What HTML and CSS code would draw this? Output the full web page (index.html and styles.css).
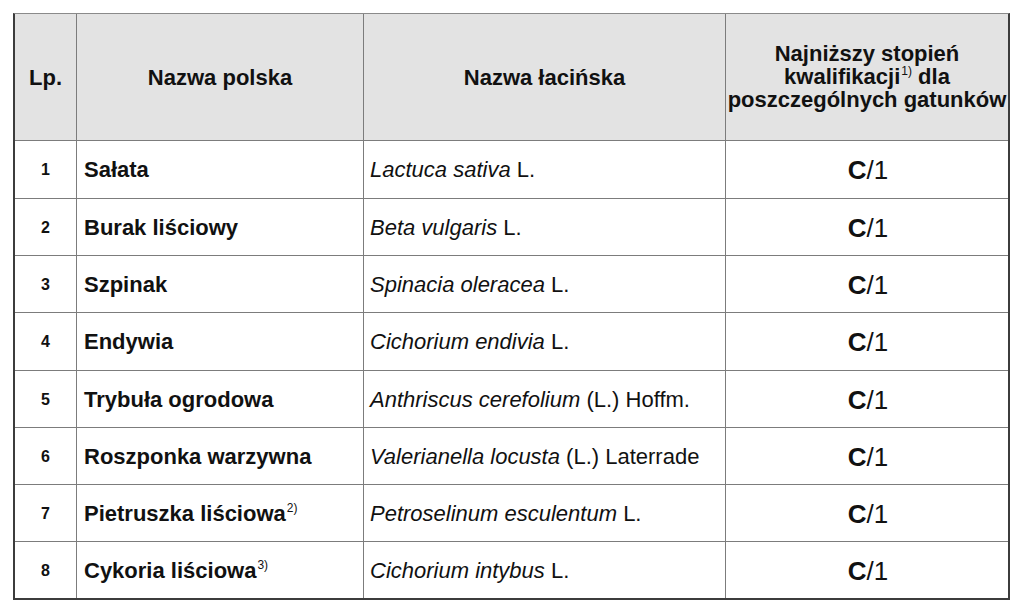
FILE: index.html
```html
<!DOCTYPE html>
<html lang="pl">
<head>
<meta charset="utf-8">
<title>Tabela gatunków</title>
<link rel="stylesheet" href="styles.css">
</head>
<body>
<div class="table">
  <div class="cell head num"><span>Lp.</span></div>
  <div class="cell head"><span>Nazwa polska</span></div>
  <div class="cell head"><span>Nazwa łacińska</span></div>
  <div class="cell head last wrap"><span>Najniższy stopień kwalifikacji<sup>1)</sup> dla poszczególnych gatunków</span></div>

  <div class="cell lp"><span>1</span></div>
  <div class="cell pl"><span>Sałata</span></div>
  <div class="cell la"><span><i>Lactuca sativa</i> L.</span></div>
  <div class="cell grade last"><span><b>C</b>/1</span></div>

  <div class="cell lp"><span>2</span></div>
  <div class="cell pl"><span>Burak liściowy</span></div>
  <div class="cell la"><span><i>Beta vulgaris</i> L.</span></div>
  <div class="cell grade last"><span><b>C</b>/1</span></div>

  <div class="cell lp"><span>3</span></div>
  <div class="cell pl"><span>Szpinak</span></div>
  <div class="cell la"><span><i>Spinacia oleracea</i> L.</span></div>
  <div class="cell grade last"><span><b>C</b>/1</span></div>

  <div class="cell lp"><span>4</span></div>
  <div class="cell pl"><span>Endywia</span></div>
  <div class="cell la"><span><i>Cichorium endivia</i> L.</span></div>
  <div class="cell grade last"><span><b>C</b>/1</span></div>

  <div class="cell lp"><span>5</span></div>
  <div class="cell pl"><span>Trybuła ogrodowa</span></div>
  <div class="cell la"><span><i>Anthriscus cerefolium</i> (L.) Hoffm.</span></div>
  <div class="cell grade last"><span><b>C</b>/1</span></div>

  <div class="cell lp"><span>6</span></div>
  <div class="cell pl"><span>Roszponka warzywna</span></div>
  <div class="cell la"><span><i>Valerianella locusta</i> (L.) Laterrade</span></div>
  <div class="cell grade last"><span><b>C</b>/1</span></div>

  <div class="cell lp"><span>7</span></div>
  <div class="cell pl"><span>Pietruszka liściowa<sup>2)</sup></span></div>
  <div class="cell la"><span><i>Petroselinum esculentum</i> L.</span></div>
  <div class="cell grade last"><span><b>C</b>/1</span></div>

  <div class="cell lp bottom"><span>8</span></div>
  <div class="cell pl bottom"><span>Cykoria liściowa<sup>3)</sup></span></div>
  <div class="cell la bottom"><span><i>Cichorium intybus</i> L.</span></div>
  <div class="cell grade last bottom"><span><b>C</b>/1</span></div>
</div>
</body>
</html>
```
FILE: styles.css
```css
html, body {
  margin: 0;
  padding: 0;
  background: #ffffff;
}

body {
  font-family: "Liberation Sans", Arial, sans-serif;
  color: #111111;
}

.table {
  display: grid;
  grid-template-columns: 62px 287px 362px 282px;
  grid-template-rows: 127px 58px 57px 57px 58px 57px 57px 57px 56px;
  width: max-content;
  margin: 13px 0 0 13px;
  border-left: 2px solid #3c3c3c;
  border-right: 2px solid #3c3c3c;
  border-top: 1px solid #8a8a8a;
  border-bottom: 2px solid #3c3c3c;
}

.cell {
  box-sizing: border-box;
  border-right: 1px solid #7c7c7c;
  border-bottom: 1px solid #7c7c7c;
  display: flex;
  align-items: center;
  font-size: 22px;
  line-height: 23px;
  white-space: nowrap;
}

.cell.last {
  border-right: none;
}

.cell.bottom {
  border-bottom: none;
}

.head {
  background: #e3e3e3;
  font-weight: bold;
  justify-content: center;
  text-align: center;
}

.head.wrap {
  white-space: normal;
  padding: 0 0 2px 0;
}

.head.wrap span {
  display: block;
  width: 282px;
}

.lp {
  justify-content: center;
  font-weight: bold;
  font-size: 16px;
}

.pl {
  font-weight: bold;
  padding-left: 7px;
}

.la {
  padding-left: 6px;
}

.grade {
  justify-content: center;
  font-size: 26px;
  padding-left: 2px;
  padding-top: 2px;
}

.grade b {
  font-weight: bold;
}

sup {
  font-size: 12px;
  line-height: 12px;
  position: relative;
  top: -9px;
  vertical-align: baseline;
  font-weight: normal;
  margin-left: 1px;
}
```
